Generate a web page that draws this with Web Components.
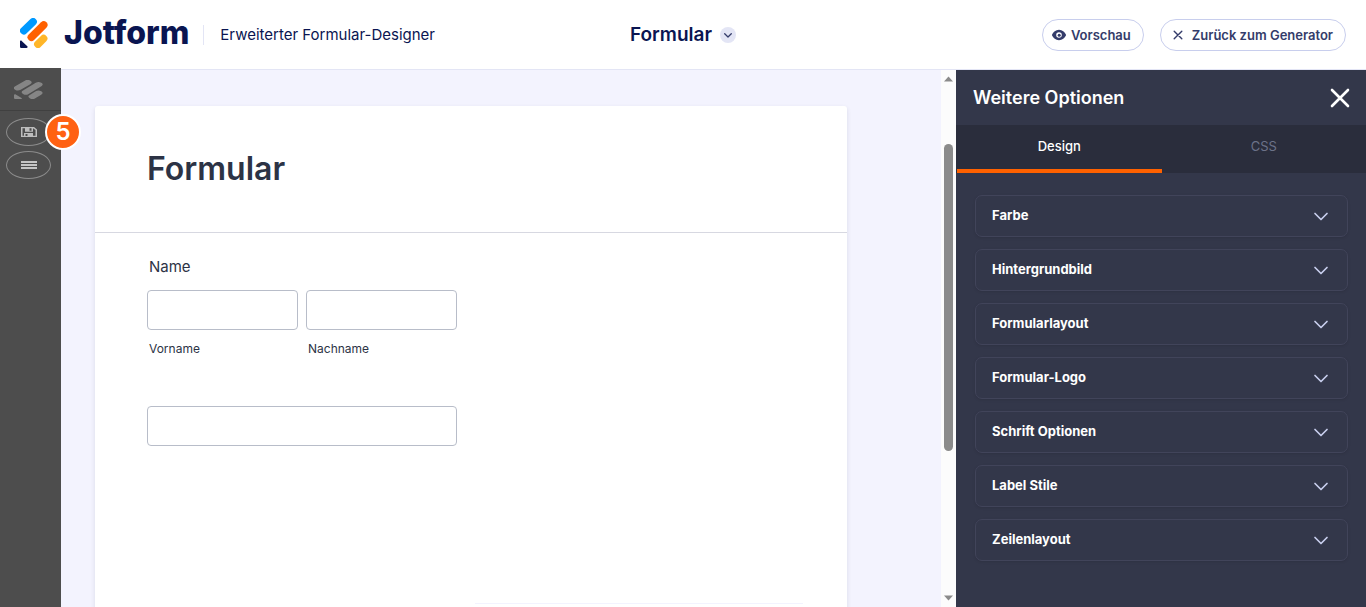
<!DOCTYPE html>
<html lang="de">
<head>
<meta charset="utf-8">
<meta name="viewport" content="width=device-width, initial-scale=1">
<title>Erweiterter Formular-Designer</title>
<style>
  html, body {
    height: 100%;
    margin: 0;
  }
  body {
    font-family: Inter, "Liberation Sans", sans-serif;
    overflow: hidden;
  }
</style>
</head>
<body>
<designer-app>
  <designer-header slot="header">
    <span slot="brand">Jotform</span>
    <span slot="subtitle">Erweiterter Formular-Designer</span>
    <span slot="title">Formular</span>
    <pill-button slot="actions" icon="eye">Vorschau</pill-button>
    <pill-button slot="actions" icon="close">Zurück zum Generator</pill-button>
  </designer-header>
  <tool-rail slot="rail"><span slot="badge">5</span></tool-rail>
  <form-preview slot="main"><span slot="heading">Formular</span></form-preview>
  <scroll-track slot="main"></scroll-track>
  <options-panel slot="main">
    <span slot="heading">Weitere Optionen</span>
    <option-row>Farbe</option-row>
    <option-row>Hintergrundbild</option-row>
    <option-row>Formularlayout</option-row>
    <option-row>Formular-Logo</option-row>
    <option-row>Schrift Optionen</option-row>
    <option-row>Label Stile</option-row>
    <option-row>Zeilenlayout</option-row>
  </options-panel>
</designer-app>

<script>
class DesignerApp extends HTMLElement {
  constructor() {
    super();
    this.attachShadow({ mode: 'open' });
  }

  connectedCallback() {
    this.shadowRoot.innerHTML = `
      <style>
        :host {
          display: flex;
          flex-direction: column;
          height: 100vh;
          background: #fff;
        }
        .body {
          display: flex;
          flex: 1;
          min-height: 0;
        }
        main {
          display: flex;
          flex: 1;
          min-width: 0;
          padding-top: 1px;
        }
        .inner {
          display: flex;
          flex: 1;
          min-width: 0;
          border-top: 1px solid #e3e5f5;
          background: #f3f3fe;
        }
      </style>
      <slot name="header"></slot>
      <div class="body">
        <slot name="rail"></slot>
        <main><div class="inner"><slot name="main"></slot></div></main>
      </div>
    `;
  }
}

class DesignerHeader extends HTMLElement {
  constructor() {
    super();
    this.attachShadow({ mode: 'open' });
  }

  connectedCallback() {
    this.shadowRoot.innerHTML = `
      <style>
        :host {
          display: grid;
          grid-template-columns: 1fr auto 1fr;
          align-items: center;
          height: 68px;
          padding: 2px 20px 0;
          box-sizing: border-box;
          color: #0a1551;
          white-space: nowrap;
        }
        .left, .title, .actions {
          display: flex;
          align-items: center;
        }
        .logo {
          display: flex;
          align-items: center;
          gap: 16px;
          padding-bottom: 4px;
          color: inherit;
          text-decoration: none;
        }
        .brand {
          font-size: 32px;
          line-height: 40px;
          font-weight: 800;
        }
        .subtitle {
          margin-left: 14px;
          padding-left: 16px;
          border-left: 1px solid #e3e5f5;
          font-size: 15px;
          line-height: 20px;
        }
        .title {
          gap: 8px;
          font-size: 19px;
          line-height: 24px;
          font-weight: 600;
        }
        .title button {
          display: flex;
          padding: 0;
          border: 0;
          border-radius: 50%;
          background: #e3e5f5;
        }
        .actions {
          justify-content: flex-end;
          gap: 16px;
        }
      </style>
      <div class="left">
        <a class="logo" href="#">
          <svg width="28" height="30" viewBox="0 0 28 30" fill="none" stroke-linecap="round" stroke-width="7.600" aria-hidden="true">
            <path d="M3.800 12.700L13.100 3.800" stroke="#0099ff"/>
            <path d="M11.400 19.300L23.700 7" stroke="#ff6100"/>
            <path d="M17.900 26.200L23.600 20.600" stroke="#ffb629"/>
            <path d="M0 23.600c0-1 1-1.400 1.700-.7l5.600 5.400c.7.700.3 1.700-.8 1.700H1.600C.7 30 0 29.300 0 28.400z" fill="#0a1551"/>
          </svg>
          <slot class="brand" name="brand"></slot>
        </a>
        <span class="subtitle"><slot name="subtitle"></slot></span>
      </div>
      <div class="title">
        <slot name="title"></slot>
        <button type="button" aria-label="Formular wechseln">
          <svg width="16" height="16" viewBox="0 0 16 16" fill="none" stroke="#343c6a" stroke-width="1.300" stroke-linecap="round" stroke-linejoin="round"><path d="M4.700 6.800L8 10l3.300-3.200"/></svg>
        </button>
      </div>
      <div class="actions"><slot name="actions"></slot></div>
    `;
  }
}

class PillButton extends HTMLElement {
  constructor() {
    super();
    this.attachShadow({ mode: 'open' });
  }

  connectedCallback() {
    const icons = {
      eye: '<path fill="currentColor" fill-rule="evenodd" d="M7 1.800C3.700 1.800 1.200 4 .1 6.500a1.200 1.200 0 0 0 0 1C1.200 10 3.700 12.200 7 12.200S12.800 10 13.900 7.500a1.200 1.200 0 0 0 0-1C12.800 4 10.300 1.800 7 1.800zM7 4.200a2.800 2.800 0 1 1 0 5.600 2.800 2.800 0 0 1 0-5.600z"/><circle cx="7.200" cy="7.200" r="1.500" fill="currentColor"/>',
      close: '<path d="M3.200 3.200l7.600 7.600M10.800 3.200l-7.600 7.600" stroke="currentColor" stroke-width="1.400" stroke-linecap="round"/>'
    };
    const icon = this.getAttribute('icon');
    this.shadowRoot.innerHTML = `
      <style>
        :host {
          display: block;
        }
        button {
          display: flex;
          align-items: center;
          gap: ${icon === 'eye' ? 5 : 7}px;
          height: 32px;
          padding: 0 12px 0 ${icon === 'eye' ? 9 : 10}px;
          border: 1px solid #c8ceed;
          border-radius: 16px;
          background: #fff;
          color: #343c6a;
          font: 600 13px/20px Inter, "Liberation Sans", sans-serif;
          cursor: pointer;
        }
      </style>
      <button type="button"><svg width="14" height="14" viewBox="0 0 14 14" aria-hidden="true">${icons[icon]}</svg><slot></slot></button>
    `;
  }
}

class ToolRail extends HTMLElement {
  constructor() {
    super();
    this.attachShadow({ mode: 'open' });
  }

  connectedCallback() {
    this.shadowRoot.innerHTML = `
      <style>
        :host {
          display: flex;
          flex-direction: column;
          flex: none;
          width: 61px;
          background: #4d4d4d;
        }
        .mark {
          display: flex;
          height: 42px;
          align-items: center;
          padding-left: 14px;
          border-bottom: 1px solid #404040;
        }
        .tools {
          display: flex;
          flex-direction: column;
          gap: 5px;
          padding: 7px 6px;
        }
        .tool {
          position: relative;
          width: 45px;
        }
        button {
          display: flex;
          align-items: center;
          justify-content: center;
          width: 45px;
          height: 28px;
          padding: 0;
          border: 1px solid #8c8c8c;
          border-radius: 50%;
          background: none;
        }
        .badge {
          position: absolute;
          top: -4px;
          right: -30px;
          z-index: 1;
          width: 32px;
          height: 32px;
          border: 2px solid #fff;
          border-radius: 50%;
          background: #ff6112;
          color: #fff;
          font: 600 24px/32px Inter, "Liberation Sans", sans-serif;
          text-align: center;
        }
      </style>
      <div class="mark">
        <svg width="29" height="19" viewBox="0 0 28 30" preserveAspectRatio="none" fill="none" stroke="#858585" stroke-width="7.600" stroke-linecap="round" aria-hidden="true">
          <path d="M3.800 12.700L13.100 3.800M11.400 19.300L23.700 7M17.900 26.200L23.600 20.600"/>
          <path d="M0 23.600c0-1 1-1.400 1.700-.7l5.600 5.400c.7.700.3 1.700-.8 1.700H1.600C.7 30 0 29.300 0 28.400z" fill="#858585" stroke="none"/>
        </svg>
      </div>
      <div class="tools">
        <div class="tool">
          <button type="button" aria-label="Speichern">
            <svg width="18" height="12" viewBox="0 0 18 12" aria-hidden="true">
              <path fill="#bdbdbd" fill-rule="evenodd" d="M1 1h13l3 2.500V11H1zM2.500 2.200v7.600H4V7h9v2.800h2.500V4L13 2.200v3.600H5V2.200zM9.500 2.200v2.500h2V2.200zM5.500 8v2h2V8z"/>
            </svg>
          </button>
          <span class="badge"><slot name="badge"></slot></span>
        </div>
        <div class="tool">
          <button type="button" aria-label="Menü">
            <svg width="18" height="10" viewBox="0 0 18 10" fill="#c4c4c4"><path d="M1 1h16v2H1zM1 4h16v2H1zM1 7h16v2H1z"/></svg>
          </button>
        </div>
      </div>
    `;
  }
}

class FormPreview extends HTMLElement {
  constructor() {
    super();
    this.attachShadow({ mode: 'open' });
  }

  connectedCallback() {
    this.shadowRoot.innerHTML = `
      <style>
        :host {
          display: block;
          flex: 1;
          min-width: 0;
          box-sizing: border-box;
          padding: 36px 94px 0 34px;
          overflow: hidden;
          color: #2c3345;
        }
        form {
          min-height: 100%;
          border-radius: 3px;
          background: #fff;
          box-shadow: 0 2px 4px #545f6f29;
        }
        header {
          padding: 43px 52px;
          border-bottom: 1px solid #d7d8e1;
        }
        h1 {
          margin: 0;
          font-size: 32px;
          line-height: 40px;
          font-weight: 600;
        }
        .fields {
          padding: 24px 52px;
        }
        fieldset {
          margin: 0;
          padding: 0;
          border: 0;
        }
        legend {
          padding: 0 2px;
          font-size: 15px;
          line-height: 20px;
        }
        .names {
          display: flex;
          gap: 8px;
          max-width: 310px;
          margin-top: 13px;
        }
        .names div {
          flex: 1;
        }
        input {
          display: block;
          width: 100%;
          height: 40px;
          box-sizing: border-box;
          border: 1px solid #b8bdc9;
          border-radius: 4px;
          background: #fff;
        }
        label {
          display: block;
          margin-top: 11px;
          padding: 0 2px;
          font-size: 12px;
          line-height: 16px;
        }
        .single {
          max-width: 310px;
          margin-top: 49px;
        }
        .next {
          width: 328px;
          margin: 157px -8px 0 auto;
          border-top: 1px solid #f3f3fe;
        }
      </style>
      <form>
        <header><h1><slot name="heading"></slot></h1></header>
        <div class="fields">
          <fieldset>
            <legend>Name</legend>
            <div class="names">
              <div><input id="first" type="text"><label for="first">Vorname</label></div>
              <div><input id="last" type="text"><label for="last">Nachname</label></div>
            </div>
          </fieldset>
          <div class="single"><input type="text" aria-label="Textfeld"></div>
          <div class="next"></div>
        </div>
      </form>
    `;
  }
}

class ScrollTrack extends HTMLElement {
  constructor() {
    super();
    this.attachShadow({ mode: 'open' });
  }

  connectedCallback() {
    this.shadowRoot.innerHTML = `
      <style>
        :host {
          display: flex;
          flex-direction: column;
          align-items: center;
          flex: none;
          width: 15px;
          box-sizing: border-box;
          padding: 6px 0;
          background: #fcfcfc;
        }
        .track {
          flex: 1;
          width: 9px;
          padding-top: 62px;
        }
        .thumb {
          height: 68%;
          border-radius: 5px;
          background: #8b8b8b;
        }
      </style>
      <svg width="9" height="6" viewBox="0 0 9 6" fill="#8b8b8b" aria-hidden="true"><path d="M0 5.500L4.500.5 9 5.500z"/></svg>
      <div class="track"><div class="thumb"></div></div>
      <svg width="9" height="6" viewBox="0 0 9 6" fill="#8b8b8b" aria-hidden="true"><path d="M0 .5h9l-4.500 5z"/></svg>
    `;
  }
}

class OptionsPanel extends HTMLElement {
  constructor() {
    super();
    this.attachShadow({ mode: 'open' });
  }

  connectedCallback() {
    this.shadowRoot.innerHTML = `
      <style>
        :host {
          display: block;
          flex: none;
          width: 410px;
          background: #33374a;
          color: #fff;
        }
        header {
          display: flex;
          align-items: center;
          justify-content: space-between;
          height: 55px;
          padding: 0 16px 0 17px;
        }
        h2 {
          margin: 0;
          font-size: 18px;
          line-height: 24px;
          font-weight: 600;
        }
        button {
          padding: 0;
          border: 0;
          background: none;
          cursor: pointer;
        }
        .close {
          display: flex;
        }
        .tabs {
          display: flex;
          height: 48px;
          padding-left: 1px;
          background: #2a2d3c;
        }
        .tabs button {
          flex: 1;
          padding-bottom: 2px;
          border-bottom: 4px solid transparent;
          color: #6c7289;
          font: 13px/20px Inter, "Liberation Sans", sans-serif;
        }
        .tabs button[aria-selected="true"] {
          border-bottom-color: #ff6100;
          color: #fff;
          font-weight: 500;
        }
        .list {
          display: flex;
          flex-direction: column;
          gap: 12px;
          padding: 22px 18px 22px 19px;
        }
      </style>
      <header>
        <h2><slot name="heading"></slot></h2>
        <button class="close" type="button" aria-label="Schließen">
          <svg width="20" height="20" viewBox="0 0 20 20" stroke="#fff" stroke-width="2.600" stroke-linecap="round"><path d="M2 2l16 16M18 2L2 18"/></svg>
        </button>
      </header>
      <div class="tabs" role="tablist">
        <button type="button" role="tab" aria-selected="true">Design</button>
        <button type="button" role="tab" aria-selected="false">CSS</button>
      </div>
      <div class="list"><slot></slot></div>
    `;
  }
}

class OptionRow extends HTMLElement {
  constructor() {
    super();
    this.attachShadow({ mode: 'open' });
  }

  connectedCallback() {
    this.shadowRoot.innerHTML = `
      <style>
        :host {
          display: block;
        }
        button {
          display: flex;
          align-items: center;
          justify-content: space-between;
          width: 100%;
          height: 42px;
          padding: 0 18px 0 16px;
          border: 1px solid #41445a;
          border-radius: 7px;
          background: #33374a;
          box-shadow: 0 1px 3px #0000001a;
          color: #fff;
          font: 700 13px/20px Inter, "Liberation Sans", sans-serif;
          cursor: pointer;
        }
        span {
          padding-bottom: 2px;
        }
      </style>
      <button type="button" aria-expanded="false">
        <span><slot></slot></span>
        <svg width="16" height="16" viewBox="0 0 16 16" fill="none" stroke="#c8ceed" stroke-width="1.700" stroke-linecap="round" stroke-linejoin="round" aria-hidden="true"><path d="M2 5.500l6 6 6-6"/></svg>
      </button>
    `;
  }
}

customElements.define('designer-app', DesignerApp);
customElements.define('designer-header', DesignerHeader);
customElements.define('pill-button', PillButton);
customElements.define('tool-rail', ToolRail);
customElements.define('form-preview', FormPreview);
customElements.define('scroll-track', ScrollTrack);
customElements.define('options-panel', OptionsPanel);
customElements.define('option-row', OptionRow);
</script>
</body>
</html>
